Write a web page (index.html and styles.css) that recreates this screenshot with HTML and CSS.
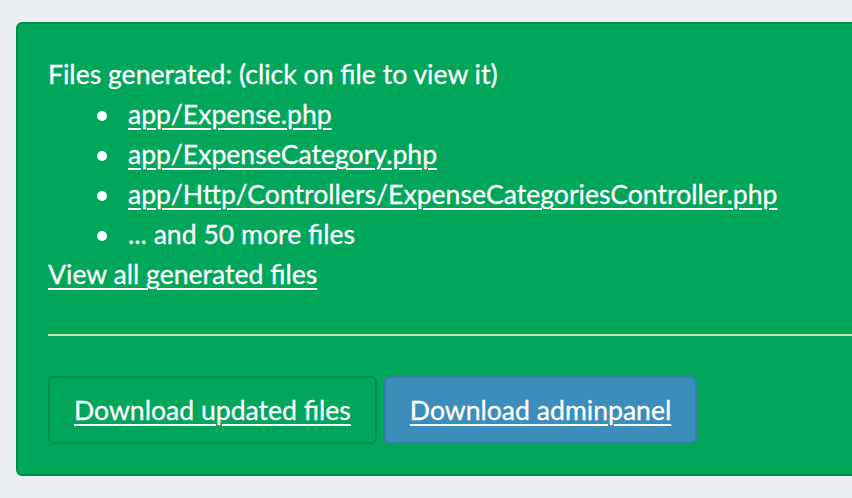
FILE: index.html
```html
<!DOCTYPE html>
<html lang="en">
<head>
    <meta charset="UTF-8">
    <meta name="viewport" content="width=device-width, initial-scale=1.0">
    <title>Files generated</title>
    <link rel="stylesheet" href="styles.css">
</head>
<body>
    <div class="alert-success">
        <div class="files-info">
            Files generated: (click on file to view it)
            <ul class="file-list">
                <li><a href="#">app/Expense.php</a></li>
                <li><a href="#">app/ExpenseCategory.php</a></li>
                <li><a href="#">app/Http/Controllers/ExpenseCategoriesController.php</a></li>
                <li>... and 50 more files</li>
            </ul>
            <a href="#">View all generated files</a>
        </div>

        <hr>

        <!-- Download buttons -->
        <div class="actions">
            <a href="#" class="btn btn-success">Download updated files</a>
            <a href="#" class="btn btn-primary">Download adminpanel</a>
        </div>
    </div>
</body>
</html>
```

FILE: styles.css
```css
body {
    font-family: "Lato", "Open Sans", sans-serif;
    font-size: 26.6px;
    line-height: 40px;
    background-color: #ecf0f5;
    color: #fff;
    margin: 0;
    padding: 22px 0 0 16px;
    overflow: hidden;
    -webkit-text-stroke: 0.3px #fff;
}

a {
    color: #fff;
    text-decoration: underline;
    text-decoration-thickness: 2px;
    text-underline-offset: 4px;
}

.alert-success {
    width: 900px;
    background-color: #00a65a;
    border: 2px solid #008d4c;
    border-radius: 6px;
    padding: 30px;
}

.file-list {
    margin: 0;
    padding-left: 80px;
    list-style: none;
}

.file-list li::before {
    content: "";
    display: inline-block;
    width: 10px;
    height: 10px;
    border-radius: 50%;
    background-color: #fff;
    margin-left: -31px;
    margin-right: 21px;
    vertical-align: 3px;
}

hr {
    border: 0;
    border-top: 2px solid #c6e4b2;
    margin: 40px 0;
}

.actions {
    display: flex;
    gap: 7px;
}

.btn {
    display: inline-block;
    padding: 12px 24px;
    border: 2px solid transparent;
    border-radius: 6px;
}

.btn-success {
    background-color: #00a65a;
    border-color: #008d4c;
}

.btn-primary {
    background-color: #3c8dbc;
    border-color: #367fa9;
}
```
